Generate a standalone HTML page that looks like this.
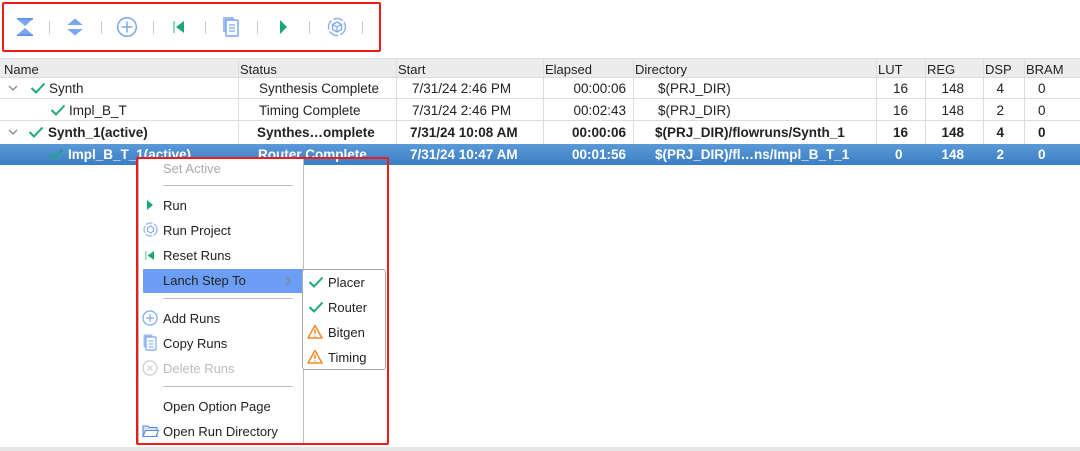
<!DOCTYPE html>
<html><head><meta charset="utf-8"><style>
*{margin:0;padding:0;box-sizing:border-box}
body{width:1080px;height:451px;background:#fff;font-family:"Liberation Sans",sans-serif;font-size:13px;color:#222;position:relative;overflow:hidden}
.a{position:absolute}
.sep{position:absolute;top:21px;width:1px;height:13px;background:#ccc}
.hdr{position:absolute;top:58px;left:0;width:1080px;height:20px;background:#ececec;border-top:1px solid #ddd;border-bottom:1px solid #ddd}
.hdr span{position:absolute;top:3px;font-size:13px;color:#222}
.row{position:absolute;left:0;width:1080px;height:22px;font-size:13.5px}
.row span{position:absolute;top:4px;white-space:nowrap}
.row span.r{text-align:right;width:60px}
.vl{position:absolute;width:1px;background:#ddd}
.b{font-weight:bold}
.sel{background:linear-gradient(#5a9ad8,#3c7ec4);color:#fff;font-weight:bold}
.mi{position:absolute;left:163px;font-size:13px;color:#222}
.ms{position:absolute;left:163px;width:130px;height:1px;background:#bbb}
.si{position:absolute;left:328px;font-size:13px}
</style></head><body>
<div class="a" style="left:2px;top:2px;width:379px;height:50px;border:2px solid #f01a1a;border-radius:2px"></div>
<svg class="a" style="left:14px;top:17px" width="22" height="20" viewBox="0 0 22 20"><polygon points="3,2 19,2 11,9" fill="#7aa7f0"/><polygon points="3,18 19,18 11,11" fill="#7aa7f0"/><rect x="3" y="1" width="16" height="1.5" fill="#5a8de8"/><rect x="3" y="17.5" width="16" height="1.5" fill="#5a8de8"/></svg>
<div class="sep" style="left:49px"></div>
<svg class="a" style="left:64px;top:17px" width="22" height="20" viewBox="0 0 22 20"><polygon points="2,9 11,1.5 20,9" fill="#7aa7f0"/><polygon points="2,11 11,18.5 20,11" fill="#7aa7f0"/><rect x="2" y="8" width="18" height="1.2" fill="#fff"/><rect x="2" y="10.8" width="18" height="1.2" fill="#fff"/></svg>
<div class="sep" style="left:101px"></div>
<svg class="a" style="left:116px;top:16px" width="22" height="22"><circle cx="11" cy="11" r="9.3" fill="none" stroke="#7aa7f0" stroke-width="1.5"/><path d="M11 5.5v11M5.5 11h11" stroke="#7aa7f0" stroke-width="1.5"/></svg>
<div class="sep" style="left:153px"></div>
<svg class="a" style="left:171px;top:19px" width="16" height="16"><rect x="2" y="2" width="2" height="12" fill="#8fd7c0"/><polygon points="13,2 13,14 5,8" fill="#1aa87a"/></svg>
<div class="sep" style="left:205px"></div>
<svg class="a" style="left:222px;top:16px" width="18" height="22"><rect x="1" y="1" width="11" height="15" rx="1" fill="#9dbdf5"/><rect x="4" y="4" width="12" height="16" rx="1" fill="#fff" stroke="#7aa7f0" stroke-width="1.5"/><path d="M7 9h6M7 12h6M7 15h6" stroke="#7aa7f0" stroke-width="1.2"/></svg>
<div class="sep" style="left:257px"></div>
<svg class="a" style="left:277px;top:19px" width="12" height="16"><polygon points="3,1 10,8 3,15" fill="#1aa87a"/></svg>
<div class="sep" style="left:309px"></div>
<svg class="a" style="left:327px;top:17px" width="20" height="20"><circle cx="10" cy="10" r="8.5" fill="none" stroke="#8fb3f2" stroke-width="1.5" stroke-dasharray="10 2"/><polygon points="10,5 14.5,7.5 14.5,12.5 10,15 5.5,12.5 5.5,7.5" fill="none" stroke="#7aa7f0" stroke-width="1.3"/><path d="M5.5 7.5L10 10l4.5-2.5M10 10v5" stroke="#7aa7f0" stroke-width="1.1" fill="none"/></svg>
<div class="sep" style="left:362px"></div>

<div class="hdr">
<span style="left:4px">Name</span><span style="left:240px">Status</span><span style="left:398px">Start</span><span style="left:545px">Elapsed</span><span style="left:635px">Directory</span><span style="left:878px">LUT</span><span style="left:927px">REG</span><span style="left:985px">DSP</span><span style="left:1026px">BRAM</span>
</div>
<div class="vl" style="left:238px;top:58px;height:86px"></div>
<div class="vl" style="left:396px;top:58px;height:86px"></div>
<div class="vl" style="left:543px;top:58px;height:86px"></div>
<div class="vl" style="left:633px;top:58px;height:86px"></div>
<div class="vl" style="left:876px;top:58px;height:86px"></div>
<div class="vl" style="left:925px;top:58px;height:86px"></div>
<div class="vl" style="left:983px;top:58px;height:86px"></div>
<div class="vl" style="left:1024px;top:58px;height:86px"></div>

<svg width="0" height="0" style="position:absolute"><defs>
<symbol id="ck" viewBox="0 0 16 12"><path d="M1.5 6l4.5 4.5L14.5 1.5" fill="none" stroke="#1aa87a" stroke-width="2"/></symbol>
<symbol id="cv" viewBox="0 0 10 6"><path d="M1 1l4 4 4-4" fill="none" stroke="#888" stroke-width="1.3"/></symbol>
<symbol id="wr" viewBox="0 0 16 15"><path d="M8 1.5L15 14H1z" fill="#fff" stroke="#f08a2a" stroke-width="1.5" stroke-linejoin="round"/><path d="M8 5.5v4.5M8 11.5v1.3" stroke="#f08a2a" stroke-width="1.5"/></symbol>
</defs></svg>

<div class="row" style="top:77px;border-bottom:1px solid #ddd">
<svg class="a" style="left:8px;top:8px" width="10" height="6"><use href="#cv"/></svg>
<svg class="a" style="left:30px;top:5px" width="16" height="12"><use href="#ck"/></svg>
<span style="left:49px">Synth</span><span style="left:259px">Synthesis Complete</span><span style="left:412px">7/31/24 2:46 PM</span><span class="r" style="left:566px">00:00:06</span><span style="left:658px">$(PRJ_DIR)</span><span class="r" style="left:848px">16</span><span class="r" style="left:904px">148</span><span class="r" style="left:944px">4</span><span style="left:1038px">0</span>
</div>
<div class="row" style="top:99px;border-bottom:1px solid #ddd">
<svg class="a" style="left:50px;top:5px" width="16" height="12"><use href="#ck"/></svg>
<span style="left:69px">Impl_B_T</span><span style="left:259px">Timing Complete</span><span style="left:412px">7/31/24 2:46 PM</span><span class="r" style="left:566px">00:02:43</span><span style="left:658px">$(PRJ_DIR)</span><span class="r" style="left:848px">16</span><span class="r" style="left:904px">148</span><span class="r" style="left:944px">2</span><span style="left:1038px">0</span>
</div>
<div class="row b" style="top:121px;height:23px">
<svg class="a" style="left:8px;top:8px" width="10" height="6"><use href="#cv"/></svg>
<svg class="a" style="left:28px;top:5px" width="16" height="12"><use href="#ck"/></svg>
<span style="left:48px">Synth_1(active)</span><span style="left:257px">Synthes…omplete</span><span style="left:410px">7/31/24 10:08 AM</span><span class="r" style="left:566px">00:00:06</span><span style="left:655px">$(PRJ_DIR)/flowruns/Synth_1</span><span class="r" style="left:848px">16</span><span class="r" style="left:904px">148</span><span class="r" style="left:944px">4</span><span style="left:1038px">0</span>
</div>
<div class="row sel" style="top:144px;height:21px">
<svg class="a" style="left:48px;top:4px" width="16" height="12"><use href="#ck"/></svg>
<span style="left:68px;top:3px">Impl_B_T_1(active)</span><span style="left:258px;top:3px">Router Complete</span><span style="left:410px;top:3px">7/31/24 10:47 AM</span><span class="r" style="left:566px;top:3px">00:01:56</span><span style="left:655px;top:3px">$(PRJ_DIR)/fl…ns/Impl_B_T_1</span><span style="left:895px;top:3px">0</span><span class="r" style="left:904px;top:3px">148</span><span class="r" style="left:944px;top:3px">2</span><span style="left:1038px;top:3px">0</span>
</div>
<div class="a" style="left:0;top:447px;width:1080px;height:4px;background:#e6e6e6"></div>

<div class="a" style="left:138px;top:157px;width:166px;height:288px;background:#fff;border:1px solid #bbb;border-radius:3px"></div>
<div class="mi" style="top:161px;color:#aaa">Set Active</div>
<div class="ms" style="top:185px"></div>
<svg class="a" style="left:145px;top:199px" width="10" height="12"><polygon points="2,1 8,6 2,11" fill="#1aa87a"/></svg>
<div class="mi" style="top:198px">Run</div>
<svg class="a" style="left:143px;top:222px" width="15" height="15"><circle cx="7.5" cy="7.5" r="6.5" fill="none" stroke="#8fb3f2" stroke-width="1.2" stroke-dasharray="7 1.5"/><polygon points="7.5,4 10.5,5.8 10.5,9.2 7.5,11 4.5,9.2 4.5,5.8" fill="none" stroke="#7aa7f0" stroke-width="1.1"/></svg>
<div class="mi" style="top:223px">Run Project</div>
<svg class="a" style="left:144px;top:250px" width="12" height="11"><rect x="1" y="1" width="1.5" height="9" fill="#8fd7c0"/><polygon points="10,1 10,10 3.5,5.5" fill="#1aa87a"/></svg>
<div class="mi" style="top:248px">Reset Runs</div>
<div class="a" style="left:143px;top:269px;width:160px;height:24px;background:#6d9ef5;border-radius:1px"></div>
<div class="mi" style="top:273px">Lanch Step To</div>
<svg class="a" style="left:285px;top:276px" width="7" height="10"><path d="M1 1l4 4-4 4" fill="none" stroke="#888" stroke-width="1.3"/></svg>
<div class="ms" style="top:298px"></div>
<svg class="a" style="left:142px;top:310px" width="16" height="16"><circle cx="8" cy="8" r="7" fill="none" stroke="#7aa7f0" stroke-width="1.2"/><path d="M8 4v8M4 8h8" stroke="#7aa7f0" stroke-width="1.2"/></svg>
<div class="mi" style="top:311px">Add Runs</div>
<svg class="a" style="left:143px;top:334px" width="14" height="17"><rect x="0.5" y="0.5" width="9" height="13" rx="1" fill="#9dbdf5"/><rect x="3" y="3" width="10" height="13" rx="1" fill="#fff" stroke="#7aa7f0" stroke-width="1.2"/><path d="M5.5 7h5M5.5 10h5M5.5 13h5" stroke="#7aa7f0"/></svg>
<div class="mi" style="top:336px">Copy Runs</div>
<svg class="a" style="left:142px;top:360px" width="16" height="16"><circle cx="8" cy="8" r="7" fill="none" stroke="#ccc" stroke-width="1.2"/><path d="M5.5 5.5l5 5M10.5 5.5l-5 5" stroke="#ccc" stroke-width="1.2"/></svg>
<div class="mi" style="top:361px;color:#bbb">Delete Runs</div>
<div class="ms" style="top:386px"></div>
<div class="mi" style="top:399px">Open Option Page</div>
<svg class="a" style="left:142px;top:425px" width="17" height="12"><path d="M1 1h5l1.5 1.5H15v9H1z" fill="#cfe0fb" stroke="#5a8de8" stroke-width="1.1"/><path d="M1 11.5l2.5-6H16.5l-2.5 6z" fill="#fff" stroke="#5a8de8" stroke-width="1.1"/></svg>
<div class="mi" style="top:424px">Open Run Directory</div>

<div class="a" style="left:302px;top:269px;width:84px;height:101px;background:#fff;border:1px solid #aaa;border-radius:3px"></div>
<svg class="a" style="left:308px;top:276px" width="16" height="12"><use href="#ck"/></svg>
<div class="si" style="top:275px">Placer</div>
<svg class="a" style="left:308px;top:301px" width="16" height="12"><use href="#ck"/></svg>
<div class="si" style="top:300px">Router</div>
<svg class="a" style="left:307px;top:324px" width="16" height="15"><use href="#wr"/></svg>
<div class="si" style="top:325px">Bitgen</div>
<svg class="a" style="left:307px;top:349px" width="16" height="15"><use href="#wr"/></svg>
<div class="si" style="top:350px">Timing</div>

<div class="a" style="left:136px;top:157px;width:253px;height:288px;border:2px solid #f01a1a;border-radius:2px"></div>
</body></html>
